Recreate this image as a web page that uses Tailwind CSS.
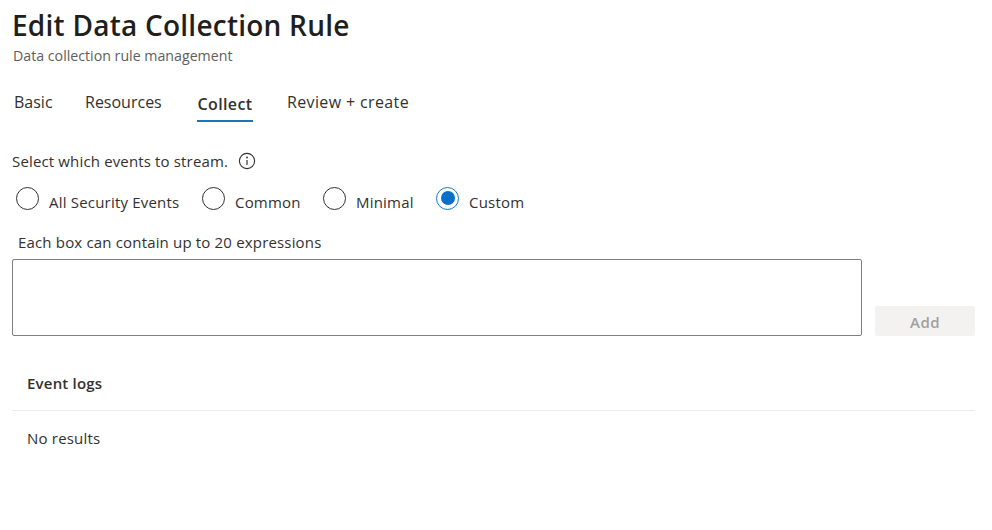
<!DOCTYPE html>
<html><head><meta charset="utf-8"><script src="https://cdn.jsdelivr.net/npm/@tailwindcss/browser@4"></script></head>
<body class="bg-white font-['Open_Sans',sans-serif] w-[992px] h-[530px] overflow-hidden text-[#323130]">
<div class="pl-[12px] pr-[17px] pt-[7px]">
  <h1 class="text-[28px] leading-[36px] font-semibold text-[#201f1e] tracking-[0.24px] m-0">Edit Data Collection Rule</h1>
  <p class="ml-px text-[14.2px] leading-[20px] text-[#605e5c] mt-[3px]">Data collection rule management</p>
  <div class="flex items-start mt-[23px] pl-[2px] text-[16px] leading-[24px] h-[44px]">
    <div class="w-[71px] pt-[1px]">Basic</div>
    <div class="w-[112px] pt-[1px]">Resources</div>
    <div class="w-[90px] pt-[3px] flex flex-col"><span class="font-semibold w-[56px] text-center tracking-[0.4px] whitespace-nowrap">Collect</span><span class="w-[56px] h-[2px] bg-[#1b76b5] mt-[4px]"></span></div>
    <div class="pt-[1px] tracking-[0.37px]">Review + create</div>
  </div>
  <div class="flex items-center gap-[10px] mt-[18px] text-[15px] leading-[20px] tracking-[0.15px]">
    <span>Select which events to stream.</span>
    <svg class="w-[18px] h-[18px]" viewBox="0 0 18 18" fill="none" stroke="#323130"><circle cx="9" cy="9" r="7.6" stroke-width="1.1"/><path d="M9 8v5" stroke-width="1.2"/><circle cx="9" cy="5.5" r=".9" fill="#323130" stroke="none"/></svg>
  </div>
  <div class="flex items-center mt-[17px] text-[15px] leading-[20px] h-[24px] pl-[4px] tracking-[0.2px]">
    <span class="w-[23px] h-[23px] rounded-full border border-[#323130] mr-[10px] mt-[-4px]"></span><span class="w-[153px] mt-[4px]">All Security Events</span>
    <span class="w-[23px] h-[23px] rounded-full border border-[#323130] mr-[10px] mt-[-4px]"></span><span class="w-[88px] mt-[4px]">Common</span>
    <span class="w-[23px] h-[23px] rounded-full border border-[#323130] mr-[10px] mt-[-4px]"></span><span class="w-[80px] mt-[4px]">Minimal</span>
    <span class="w-[23px] h-[23px] rounded-full border border-[#0f7bd0] mr-[10px] mt-[-4px] flex items-center justify-center"><span class="w-[14px] h-[14px] rounded-full bg-[#0a6fc9]"></span></span><span class="mt-[4px]">Custom</span>
  </div>
  <p class="text-[15px] leading-[20px] mt-[20px] pl-[6px] tracking-[0.17px]">Each box can contain up to 20 expressions</p>
  <div class="flex items-end gap-[13px] mt-[7px]">
    <div class="w-[850px] h-[77px] border border-[#7f7f7f] rounded-[2px]"></div>
    <button class="w-[100px] h-[30px] pt-[2px] bg-[#f3f2f1] text-[#a19f9d] text-[15px] tracking-[0.4px] font-semibold rounded-[2px]">Add</button>
  </div>
  <div class="mt-[26px] w-[963px]">
    <div class="h-[49px] pl-[15px] pt-[9px] border-b border-[#edebe9] text-[15px] leading-[24px] font-semibold tracking-[0.2px]">Event logs</div>
    <div class="pl-[15px] pt-[15px] text-[15px] leading-[24px] tracking-[0.2px]">No results</div>
  </div>
</div>
</body></html>
